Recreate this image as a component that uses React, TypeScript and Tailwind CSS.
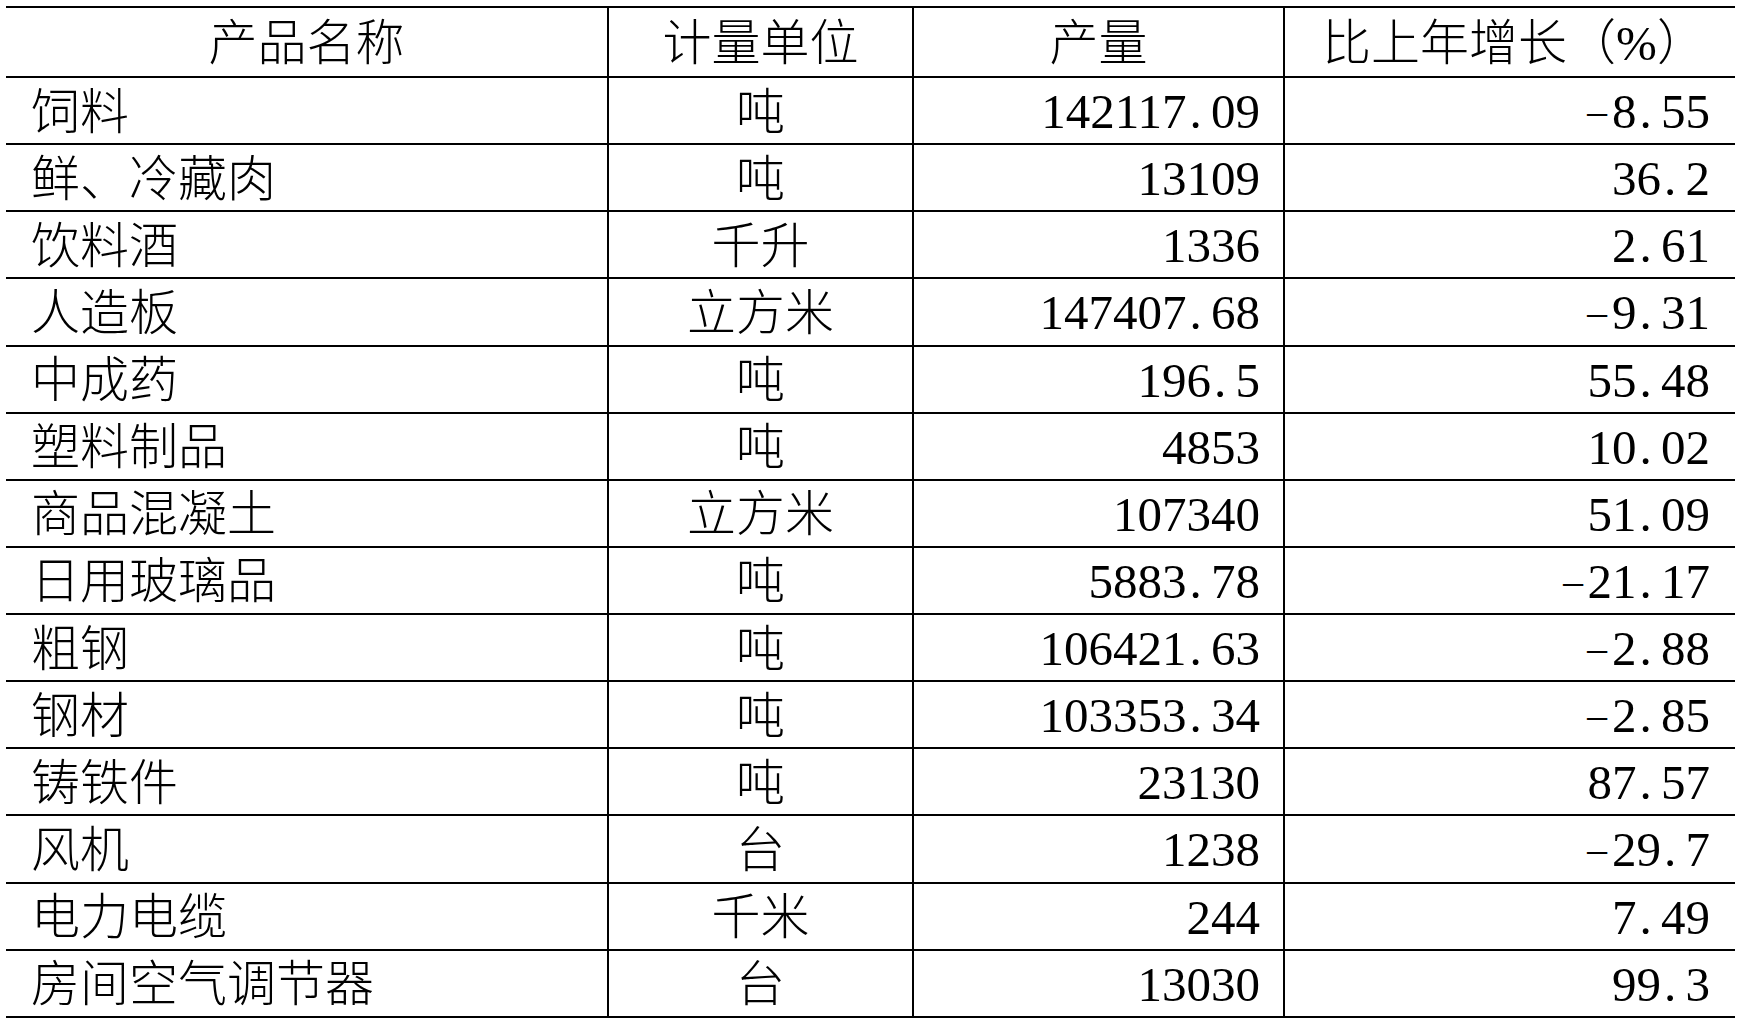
import React from "react";

const rows: [string, string, string, string][] = [
  ["饲料", "吨", "142117.09", "-8.55"],
  ["鲜、冷藏肉", "吨", "13109", "36.2"],
  ["饮料酒", "千升", "1336", "2.61"],
  ["人造板", "立方米", "147407.68", "-9.31"],
  ["中成药", "吨", "196.5", "55.48"],
  ["塑料制品", "吨", "4853", "10.02"],
  ["商品混凝土", "立方米", "107340", "51.09"],
  ["日用玻璃品", "吨", "5883.78", "-21.17"],
  ["粗钢", "吨", "106421.63", "-2.88"],
  ["钢材", "吨", "103353.34", "-2.85"],
  ["铸铁件", "吨", "23130", "87.57"],
  ["风机", "台", "1238", "-29.7"],
  ["电力电缆", "千米", "244", "7.49"],
  ["房间空气调节器", "台", "13030", "99.3"],
];

function Num({ v }: { v: string }) {
  return (
    <span className="whitespace-nowrap">
      {v.split("").map((c, i) => {
        if (c === ".")
          return (
            <span key={i} className="inline-block w-[0.5em] pl-[0.06em] text-left">
              .
            </span>
          );
        if (c === "-")
          return (
            <span key={i} className="inline-block w-[0.56em] pr-[0.04em] text-center">
              <span className="inline-block scale-x-[1.6] scale-y-[0.55]">-</span>
            </span>
          );
        return <span key={i}>{c}</span>;
      })}
    </span>
  );
}

export default function App() {
  return (
    <div className="w-[1738px] h-[1019px] bg-white overflow-hidden">
      <div className="ml-[6px] pt-[6px] w-[1729px] text-black text-[49px] leading-none font-['Liberation_Serif','Noto_Sans_CJK_SC',serif] font-light">
        <div className="grid grid-cols-[601px_305px_371px_452px] h-[72px] border-t-2 border-b-2 border-black">
          <div className="flex items-center justify-center pt-[2px]">产品名称</div>
          <div className="flex items-center justify-center pt-[2px] border-l-2 border-black">计量单位</div>
          <div className="flex items-center justify-center pt-[2px] border-l-2 border-black">产量</div>
          <div className="flex items-center justify-center pt-[2px] pl-[8px] border-l-2 border-black">
            比上年增长（%）
          </div>
        </div>
        {rows.map((r, i) => (
          <div
            key={i}
            className="grid grid-cols-[601px_305px_371px_452px] h-[67.14px] border-b-2 border-black"
          >
            <div className="flex items-center pl-[25px] pt-[3px]">{r[0]}</div>
            <div className="flex items-center justify-center pt-[3px] border-l-2 border-black">{r[1]}</div>
            <div className="flex items-center justify-end pr-[23px] pt-[2px] border-l-2 border-black">
              <Num v={r[2]} />
            </div>
            <div className="flex items-center justify-end pr-[25px] pt-[2px] border-l-2 border-black">
              <Num v={r[3]} />
            </div>
          </div>
        ))}
      </div>
    </div>
  );
}
